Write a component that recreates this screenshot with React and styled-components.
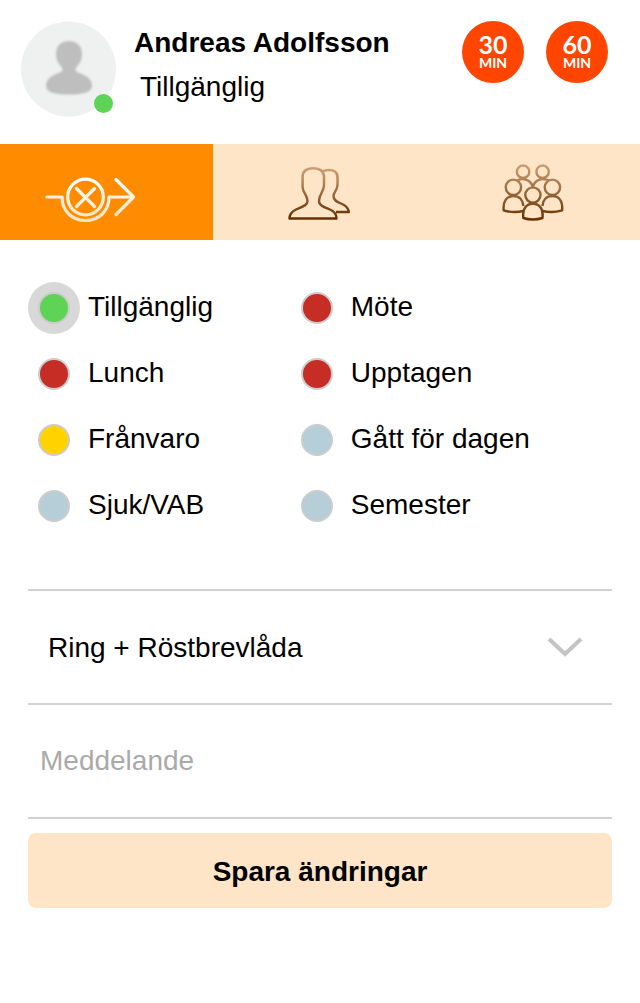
import React, { useState } from "react";
import styled, { createGlobalStyle } from "styled-components";

const GlobalStyle = createGlobalStyle`
  * {
    box-sizing: border-box;
  }

  body {
    margin: 0;
    background-color: #fff;
    color: #000;
    font-family: "Liberation Sans", Arial, sans-serif;
    font-size: 28px;
    line-height: 32px;
  }

  button,
  input,
  select {
    font: inherit;
    color: inherit;
  }
`;

const GREEN = "#5ed355";
const RED = "#c62d25";
const YELLOW = "#ffd200";
const BLUE = "#b6ced8";

const statuses = [
  { id: "available", label: "Tillgänglig", color: GREEN },
  { id: "meeting", label: "Möte", color: RED },
  { id: "lunch", label: "Lunch", color: RED },
  { id: "busy", label: "Upptagen", color: RED },
  { id: "absent", label: "Frånvaro", color: YELLOW },
  { id: "gone", label: "Gått för dagen", color: BLUE },
  { id: "sick", label: "Sjuk/VAB", color: BLUE },
  { id: "vacation", label: "Semester", color: BLUE }
];

const AvatarIcon = () => (
  <svg width="96" height="96" viewBox="21 21 96 96" aria-hidden="true">
    <defs>
      <filter id="soft">
        <feGaussianBlur stdDeviation="0.9" />
      </filter>
    </defs>
    <circle cx="68.5" cy="69" r="47.5" fill="#eff1f1" />
    <path
      filter="url(#soft)"
      fill="#bebebe"
      d="M69 41C77 41 82 46 82 54C82 61 79 64 76.5 67C75 69 75 71 78 72.5C86 75 92 79 92 85.5C92 92 85 94.5 69 94.5C53 94.5 46 92 46 85.5C46 79 52 75 60 72.5C63 71 63 69 61.5 67C59 64 56 61 56 54C56 46 61 41 69 41Z"
    />
  </svg>
);

const ForwardIcon = () => (
  <svg width="120" height="80" viewBox="0 -8 120 80" aria-hidden="true">
    <defs>
      <linearGradient id="light" gradientUnits="userSpaceOnUse" x1="0" y1="18" x2="0" y2="62">
        <stop offset="0" stopColor="#fff" />
        <stop offset="1" stopColor="#ffe2c0" />
      </linearGradient>
    </defs>
    <g
      fill="none"
      stroke="url(#light)"
      strokeWidth="3.2"
      strokeLinecap="round"
      strokeLinejoin="round"
    >
      <path d="M17 37.01L32 37C32 51 42 60.5 55.5 60.5C69 60.5 79 51 79 37H102" />
      <circle cx="55.5" cy="37" r="17.8" />
      <path d="M46.5 28.5L64.5 46.5M64.5 28.5L46.5 46.5" />
      <path d="M86 19.5L103.5 37L86 54.5" />
    </g>
  </svg>
);

const PersonIcon = () => (
  <svg width="100" height="80" viewBox="-14 -8 100 80" aria-hidden="true">
    <defs>
      <linearGradient id="brownPair" gradientUnits="userSpaceOnUse" x1="0" y1="8" x2="0" y2="58">
        <stop offset="0" stopColor="#cca075" />
        <stop offset="1" stopColor="#663100" />
      </linearGradient>
    </defs>
    <g fill="none" stroke="url(#brownPair)" strokeWidth="2.4" strokeLinejoin="round">
      <path d="M5.5 58.5C5.5 54 8 51.5 12 49.5C17 47 23.5 46 23.5 41C23.5 35 18.8 33 18.6 27L18.6 17C18.6 10.5 23 8.2 29 8.2C35.5 8.2 40 11 40 17L40 25C40 32 35 34 35 41C35 46 41 47.5 46 49.5C50.5 51.5 52.5 54 52.5 58.5Z" />
      <path d="M38.5 11.5C42 9.5 48 9.5 51 11.5C54.5 14 53.5 19 53.5 25C53 31 49.5 32 49.5 36C49.5 42 56 42.5 60 45C63 47 64.5 49 64.8 52H52" />
    </g>
  </svg>
);

const GroupIcon = () => (
  <svg width="90" height="80" viewBox="-10 -8 90 80" aria-hidden="true">
    <defs>
      <linearGradient id="brownGroup" gradientUnits="userSpaceOnUse" x1="0" y1="4" x2="0" y2="60">
        <stop offset="0" stopColor="#cca075" />
        <stop offset="1" stopColor="#663100" />
      </linearGradient>
    </defs>
    <g fill="none" stroke="url(#brownGroup)" strokeWidth="2.4" strokeLinejoin="round">
      <circle cx="25.1" cy="11.7" r="6.2" />
      <circle cx="44.6" cy="11.7" r="6.2" />
      <path d="M19 20.5C25.5 17 33 20 34.8 27C36.6 20 44 17 50.7 20.5" />
      <circle cx="15.4" cy="27.3" r="7.7" />
      <circle cx="54.4" cy="27.3" r="7.7" />
      <circle cx="34.9" cy="35" r="7.6" />
      <path d="M25.4 51C18.5 52.6 12 52.3 5.7 50.3C4.8 41.5 8.5 36 15.4 36C21.5 36 25 40 25.4 46" />
      <path d="M44.4 51C51.3 52.6 57.8 52.3 64.1 50.3C65 41.5 61.3 36 54.4 36C48.3 36 44.8 40 44.4 46" />
      <path d="M25.3 58C24.4 49 28 43.8 34.9 43.8C41.8 43.8 45.4 49 44.5 58C38 60 31.5 60 25.3 58Z" />
    </g>
  </svg>
);

const App = () => {
  const [status, setStatus] = useState("available");
  const [message, setMessage] = useState("");

  return (
    <>
      <GlobalStyle />
      <Header>
        <Avatar>
          <AvatarIcon />
          <Presence />
        </Avatar>
        <User>
          <Name>Andreas Adolfsson</Name>
          <Current>Tillgänglig</Current>
        </User>
        <Timers>
          <Timer type="button">
            <strong>30</strong>
            <span>MIN</span>
          </Timer>
          <Timer type="button">
            <strong>60</strong>
            <span>MIN</span>
          </Timer>
        </Timers>
      </Header>

      <Tabs>
        <Tab type="button" $active aria-label="Vidarekoppling">
          <ForwardIcon />
        </Tab>
        <Tab type="button" aria-label="Kontakter">
          <PersonIcon />
        </Tab>
        <Tab type="button" aria-label="Grupper">
          <GroupIcon />
        </Tab>
      </Tabs>

      <Form onSubmit={e => e.preventDefault()}>
        <StatusList>
          {statuses.map(item => (
            <Status key={item.id}>
              <Radio
                type="radio"
                name="status"
                value={item.id}
                $color={item.color}
                checked={status === item.id}
                onChange={() => setStatus(item.id)}
              />
              {item.label}
            </Status>
          ))}
        </StatusList>
        <Field>
          <Select aria-label="Svarsläge" defaultValue="voicemail">
            <option value="voicemail">Ring + Röstbrevlåda</option>
          </Select>
          <Chevron width="40" height="26" viewBox="0 0 40 26" aria-hidden="true">
            <path d="M4 4L20 19L36 4" fill="none" stroke="#c4c4c4" strokeWidth="4" />
          </Chevron>
        </Field>
        <Field>
          <Message
            type="text"
            aria-label="Meddelande"
            placeholder="Meddelande"
            value={message}
            onChange={e => setMessage(e.target.value)}
          />
        </Field>
        <Save type="submit">Spara ändringar</Save>
      </Form>
    </>
  );
};

const Header = styled.header`
  display: flex;
  align-items: flex-start;
  height: 144px;
  padding: 21px 32px 0 21px;
`;

const Avatar = styled.div`
  position: relative;
  height: 96px;
  margin-right: 17px;

  svg {
    display: block;
  }
`;

const Presence = styled.span`
  position: absolute;
  right: 4px;
  bottom: 4px;
  width: 19px;
  height: 19px;
  border-radius: 50%;
  background-color: ${GREEN};
`;

const User = styled.div`
  flex: 1;
  padding-top: 6px;
`;

const Name = styled.h1`
  margin: 0 0 12px;
  font-size: 28px;
  font-weight: 700;
  line-height: 32px;
  white-space: nowrap;
`;

const Current = styled.div`
  padding-left: 6px;
`;

const Timers = styled.div`
  display: flex;
  gap: 22px;
`;

const Timer = styled.button`
  display: flex;
  flex-direction: column;
  align-items: center;
  justify-content: center;
  width: 62px;
  height: 62px;
  padding: 2px 0 0;
  border: none;
  border-radius: 50%;
  background-color: #ff4500;
  color: #fff;
  font-family: Lato, sans-serif;
  font-weight: 700;
  cursor: pointer;

  strong {
    font-size: 25px;
    font-weight: 700;
    line-height: 20px;
  }

  span {
    font-size: 14px;
    line-height: 18px;
  }
`;

const Tabs = styled.nav`
  display: grid;
  grid-template-columns: repeat(3, 1fr);
  height: 96px;
`;

const Tab = styled.button`
  display: flex;
  align-items: center;
  justify-content: center;
  padding: 0 ${props => (props.$active ? "33px" : "0")} 0 0;
  border: none;
  background-color: ${props => (props.$active ? "#ff8c00" : "#ffe5c8")};
  cursor: pointer;
`;

const Form = styled.form`
  padding: 34px 28px;
`;

const StatusList = styled.div`
  display: grid;
  grid-template-columns: 45% 55%;
  margin-bottom: 51px;
`;

const Status = styled.label`
  display: flex;
  align-items: center;
  height: 66px;
  padding-left: 10px;
  cursor: pointer;
`;

const Radio = styled.input`
  appearance: none;
  flex: none;
  width: 32px;
  height: 32px;
  margin: 2px 18px 0 0;
  border: 2px solid #cccccc;
  border-radius: 50%;
  background-color: ${props => props.$color};

  &:checked {
    box-shadow: 0 0 0 10px #d8d8d8;
  }
`;

const Field = styled.div`
  position: relative;
  border-top: 2px solid #d2d2d2;

  & + & {
    border-bottom: 2px solid #d2d2d2;
  }
`;

const Select = styled.select`
  appearance: none;
  display: block;
  width: 100%;
  height: 112px;
  padding: 2px 70px 0 20px;
  border: none;
  background: transparent;
`;

const Chevron = styled.svg`
  position: absolute;
  top: 44px;
  right: 27px;
  pointer-events: none;
`;

const Message = styled.input`
  display: block;
  width: 100%;
  height: 112px;
  padding: 0 12px;
  border: none;
  background: transparent;

  &::placeholder {
    color: #aaaaaa;
    opacity: 1;
  }
`;

const Save = styled.button`
  display: block;
  width: 100%;
  height: 75px;
  margin-top: 14px;
  padding: 2px 0 0;
  border: none;
  border-radius: 8px;
  background-color: #ffe5c8;
  font-weight: 700;
  cursor: pointer;
`;

export default App;
